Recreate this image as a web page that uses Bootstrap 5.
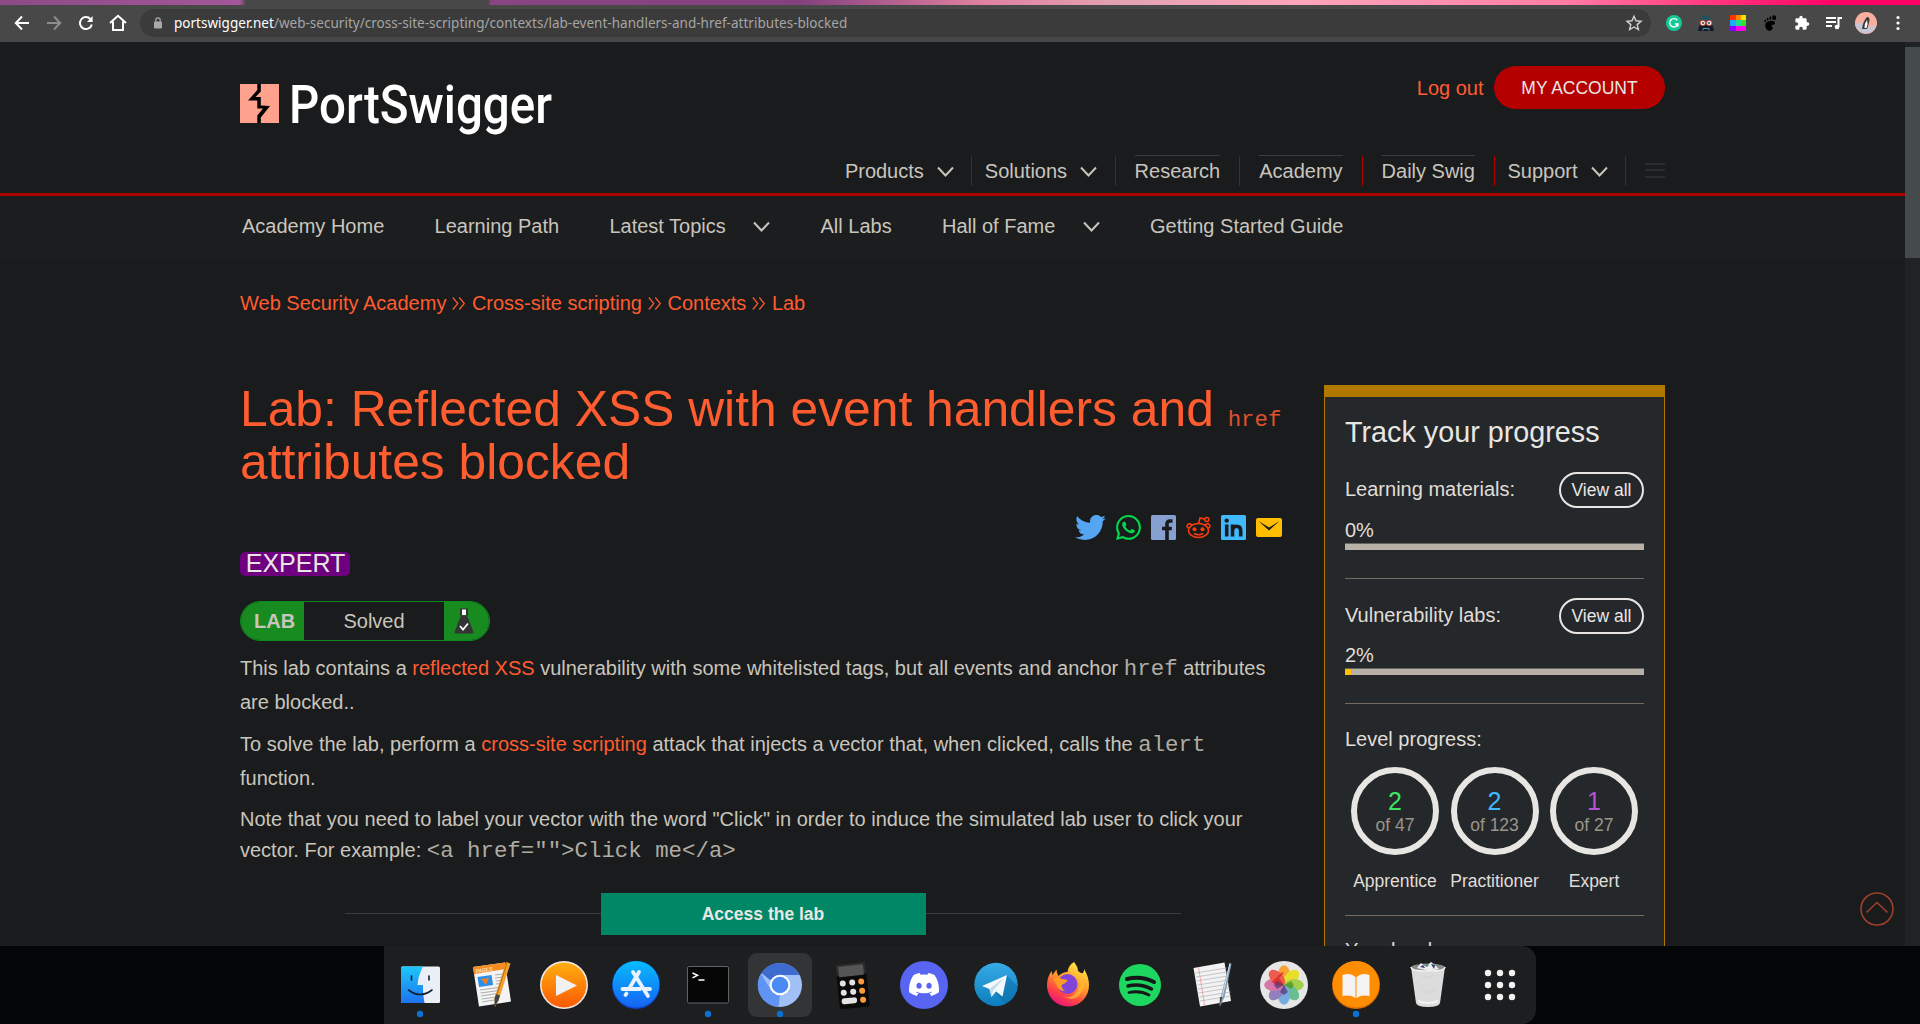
<!DOCTYPE html>
<html lang="en">
<head>
<meta charset="utf-8">
<title>Lab: Reflected XSS with event handlers and href attributes blocked</title>
<link href="https://cdn.jsdelivr.net/npm/bootstrap@5.3.0/dist/css/bootstrap.min.css" rel="stylesheet">
<style>
body{width:1920px;height:1024px;overflow:hidden;background:#191b1c;color:#c9c5bd;font:20px/30px "Liberation Sans",Arial,sans-serif}
svg{display:block;flex:none}
a{color:#ff5c30;text-decoration:none}
.tabstrip{height:5px;background:linear-gradient(90deg,#8d4a86 0,#a3579a 240px,#474747 246px,#474747 488px,#8a4584 491px,#84407f 800px,#e080a0 980px,#e2a2b2 1120px,#ffa5bb 1300px,#ff7ea6 1560px,#ff2a78 1740px,#ff0066 1840px)}
.toolbar{height:37px;background:#484848;padding-left:6px;padding-right:6px}
.tool{width:32px;height:36px;padding-bottom:1px;display:flex;align-items:center;justify-content:center}
.urlbar{width:1511px;height:28px;margin-left:6px;margin-right:7px;margin-top:-1px;border-radius:14px;background:#3b3b3b;font:13.5px/28px "Noto Sans",sans-serif;color:#a5a5a5;padding:0 8px 0 13px}
.urltext{margin-left:11px;letter-spacing:.02px;white-space:nowrap}
.viewport-row{height:904px}
.webpage{width:1905px;overflow:hidden;position:relative}
.scroller{width:15px;background:#202324;padding-top:5px}
.scroller div{height:211px;background:#454a4d}
.wrap{width:1425px;margin-left:240px}
.masthead{height:154px;border-bottom:3px solid #aa0000;background:#1a1b1d}
.masthead .wrap{height:151px}
.brandmark{padding-top:41px}
.brandmark svg{overflow:visible}
.account-btn{width:171px;height:43px;border-radius:22px;background:#b50000;color:#e8e6e3;font-size:17.5px;line-height:43px;border:0;padding:1px 0 0;text-align:center}
.mainnav{height:30px;line-height:30px;margin-bottom:7px}
.mainnav>div{border-right:1px solid #aa0000;height:30px}
.drop{padding:0 17.5px 0 12.5px;display:flex;align-items:center;gap:13px}
.plain{padding:0 19px}
.plain span{display:block;box-shadow:0 -1px 0 #3a3d3f}
.mainnav>.last{border:0;padding:7px 0 0 19px}
.subnav{height:62px;line-height:58px;padding-left:242px;gap:50.3px;background:#1b1d1e}
.subnav div{white-space:nowrap;display:flex;align-items:center;height:60px;gap:27.4px}
.crumbs{height:30px;margin-top:30px;color:#ff5c30;gap:5px}
.columns{margin-top:64px}
.lesson{width:1043px}
h1{font-size:49.78px;line-height:53px;font-weight:400;color:#ff5c30;margin:1px 0 0;white-space:nowrap}
code{font:22.4px/1 "Liberation Mono","Courier New",monospace;color:inherit;line-height:0;opacity:.85}
.social{height:25px;margin-top:26px;padding-right:1px;gap:10px}
.level{width:110px;height:24px;line-height:22px;margin-top:12px;padding-left:1px;border-radius:5px;background:#6e0080;color:#e8e6e3;font-size:25px;text-align:center}
.lab-pill{width:250px;height:40px;margin-top:25px;border:1px solid #0b8a1d;border-radius:20px;overflow:hidden;line-height:38px}
.lab-pill .tag{width:63px;background:#178b1f;font-weight:700;padding-left:13px}
.lab-pill .flask{width:45px;background:#178b1f;padding:6px 0 0 10px}
.lesson p{margin:0 0 8px;line-height:34px;white-space:nowrap}
.lesson p.tight{line-height:31px;margin:9px 0 0}
.launch{margin:27px 102px 0 105px}
.launch i{height:1px;background:#3a3d3f;flex:1;margin-bottom:2px}
.launch .btn{width:325px;height:42px;border:0;border-radius:0;background:#008766;color:#e8e6e3;font-weight:700;font-size:17.5px;line-height:40px;padding:0 0 1px}
.tracker{width:341px;height:575px;margin-left:41px;margin-top:3px;border:1px solid #b07800;border-top-width:12px;background:#25282b;color:#e0ddd8;padding:0 20px}
.tracker h2{font-size:28.75px;line-height:34px;font-weight:400;margin:18px 0 23px;color:#e8e6e3}
.tracker .title{padding-bottom:2px}
.tracker .pill{width:85px;height:36px;border:2px solid #e8e6e3;border-radius:18px;text-align:center;font-size:17.5px;line-height:33px;color:#e8e6e3}
.tracker .pct{line-height:30px;margin-top:7px}
.meter{height:7px;margin-top:-2px;background:#b7b1a7;margin-bottom:28px;border-top:1px solid #66645f}
.meter div{height:6px;background:#ffbe00}
.rule{height:1px;background:#736b5e}
.ring{width:88px;height:88px;border:6px solid #e8e6e3;border-radius:50%;text-align:center;padding-top:15px;line-height:20px;font-size:17.5px;color:#9b958a}
.ring b{display:block;font-weight:400;font-size:25px;line-height:27px}
.lvls{margin:13px 0 0 6px;gap:11.5px}
.lvls>div{width:88px;font-size:17.5px;text-align:center;color:#e0ddd8;white-space:nowrap}
.lvls .cap{margin:11px -4px 0;line-height:30px}
.totop{position:absolute;right:11px;bottom:20px}
.dockbar{height:78px;background:#040506}
.dock{width:1152px;margin-left:384px;background:#1d1e1f;border-radius:0 14px 14px 0}
</style>
<script src="https://cdn.jsdelivr.net/npm/bootstrap@5.3.0/dist/js/bootstrap.bundle.min.js"></script>
</head>
<body>
<div class="tabstrip"></div>
<div class="toolbar d-flex align-items-center">
 <div class="tool"><svg width="16" height="16" fill="none" stroke="#fff" stroke-width="2"><path d="M15 8H2M8 1.5 1.8 8 8 14.5"/></svg></div>
 <div class="tool"><svg width="16" height="16" fill="none" stroke="#8d8d8d" stroke-width="2"><path d="M1 8h13M8 1.5 14.2 8 8 14.5"/></svg></div>
 <div class="tool"><svg width="16" height="16" fill="none" stroke="#fff" stroke-width="2"><path d="M13.8 9.5A6 6 0 1 1 12.4 4"/><path d="M14.6 1v6H9z" fill="#fff" stroke="none"/></svg></div>
 <div class="tool"><svg width="18" height="18" fill="none" stroke="#fff" stroke-width="2"><path d="M1 9 9 1.8 17 9M4 7.5V16h10V7.5"/></svg></div>
 <div class="urlbar d-flex align-items-center">
  <svg width="10" height="12"><rect x="1" y="4.5" width="8" height="7" rx="1" fill="#a9a9ad"/><path d="M2.8 5V3a2.2 2.2 0 0 1 4.400 0v2" fill="none" stroke="#a9a9ad" stroke-width="1.2"/></svg>
  <span class="urltext"><span class="text-white">portswigger.net</span>/web-security/cross-site-scripting/contexts/lab-event-handlers-and-href-attributes-blocked</span>
  <svg class="ms-auto" width="18" height="18" viewBox="0 0 18 18" fill="none" stroke="#d0d0d0" stroke-width="1.400"><path d="M9 2.200 11 6.800l5 .5-3.800 3.300 1.200 5L9 13l-4.400 2.600 1.200-5L2 7.300l5-.5z"/></svg>
 </div>
 <div class="tool"><svg width="16" height="16"><circle cx="8" cy="8" r="8" fill="#11c996"/><path d="M11.300 5.200A4.200 4.200 0 1 0 12 9H8.800M12 8.500v3" fill="none" stroke="#fff" stroke-width="1.400"/></svg></div>
 <div class="tool"><svg width="18" height="18"><path d="M4 8Q4 1 9 1t5 7l3 9H1z" fill="#22505f"/><path d="M2.500 11h13l1.500 6H1z" fill="#111d28"/><circle cx="5.800" cy="9" r="3" fill="#d8503d"/><circle cx="12.200" cy="9" r="3" fill="#d8503d"/><circle cx="5.800" cy="9" r="2.100" fill="#fff"/><circle cx="12.200" cy="9" r="2.100" fill="#fff"/><circle cx="6" cy="9" r=".9" fill="#123"/><circle cx="12" cy="9" r=".9" fill="#123"/><path d="M6 16.500v-2h6v2" stroke="#5c8ba8" fill="none"/></svg></div>
 <div class="tool"><svg width="16" height="16" shape-rendering="crispEdges"><path d="M0 0h6v5H0z" fill="#ff3300"/><path d="M6 0h5v5H6z" fill="#ff8a00"/><path d="M11 0h5v5h-5z" fill="#ffe100"/><path d="M0 5h6v6H0z" fill="#25a8ff"/><path d="M6 5h5v6H6z" fill="#1ee08a"/><path d="M11 5h5v6h-5z" fill="#35e02b"/><path d="M0 11h6v5H0z" fill="#8f00ff"/><path d="M6 11h10v5H6z" fill="#ff00ee"/></svg></div>
 <div class="tool"><svg width="14" height="16" fill="#000"><path d="M7 6c3-.5 5 .3 5 2 0 1.600-1.500 1.800-2.800 2-1.300.3-1 1.500 0 1.800 1 .4.800 3.500-2.200 4C4 16 2.300 13 2.300 10.300S4 6.500 7 6z"/><ellipse cx="11.200" cy="2.700" rx="2" ry="2.400"/><ellipse cx="7.400" cy="3" rx="1" ry="1.700"/><ellipse cx="4.600" cy="4.200" rx=".9" ry="1.400"/><ellipse cx="2.200" cy="6" rx=".8" ry="1.200"/></svg></div>
 <div class="tool"><svg width="16" height="16" viewBox="0 0 24 24" fill="#fff"><path d="M20.500 11H19V7c0-1.100-.9-2-2-2h-4V3.500a2.500 2.500 0 0 0-5 0V5H4c-1.100 0-2 .9-2 2v3.800h1.500a2.700 2.700 0 0 1 0 5.400H2V20c0 1.100.9 2 2 2h3.800v-1.500a2.700 2.700 0 0 1 5.400 0V22H17c1.100 0 2-.9 2-2v-4h1.500a2.500 2.500 0 0 0 0-5z"/></svg></div>
 <div class="tool"><svg width="18" height="16" fill="none" stroke="#fff" stroke-width="2"><path d="M1 3h10M1 7h10M1 11h6M13.500 12V3H17"/><circle cx="12" cy="12" r="2.300" fill="#fff" stroke="none"/></svg></div>
 <div class="tool"><svg width="22" height="22"><circle cx="11" cy="11" r="11" fill="#f9b0a0"/><path d="M0 12.500 5 10l8 5 8.500-2A11 11 0 0 1 0 12.500z" fill="#c6c6d4"/><path d="M7 17q1-8 5-12 2.500-.5 2.500 2.500T12 17z" fill="#3a3a3a"/><path d="M9.500 16q0-5 2.500-8 1.500 4-.5 8z" fill="#fff"/></svg></div>
 <div class="tool"><svg width="4" height="16" fill="#fff"><circle cx="2" cy="2.500" r="1.600"/><circle cx="2" cy="8" r="1.600"/><circle cx="2" cy="13.500" r="1.600"/></svg></div>
</div>

<div class="viewport-row d-flex">
<div class="webpage">
 <header class="masthead">
  <div class="wrap d-flex justify-content-between">
   <div class="brandmark">
    <svg width="320" height="66"><rect y="1" width="39" height="39" fill="#ffa28d"/><path d="M17.300 1h3.500v7.500L15.500 14h5.300v8.500l9.200.5-9.200 11.500V40h-3.500v-7.500l5.700-7h-5.700v-7.900H8L17.300 7z" fill="#000"/><text x="49" y="40" font-family="Roboto" font-weight="500" font-size="54" fill="#fff" textLength="263" lengthAdjust="spacingAndGlyphs">PortSwigger</text></svg>
   </div>
   <div class="d-flex flex-column justify-content-between align-items-end pt-4">
    <div class="d-flex align-items-center"><a href="#" style="margin-right:10.500px">Log out</a><button class="account-btn">MY ACCOUNT</button></div>
    <nav class="mainnav d-flex">
     <div class="drop">Products <svg width="17" height="11" fill="none" stroke="#c9c5bd" stroke-width="2"><path d="m1 1.500 7.500 8 7.500-8"/></svg></div>
     <div class="drop">Solutions <svg width="17" height="11" fill="none" stroke="#c9c5bd" stroke-width="2"><path d="m1 1.500 7.500 8 7.500-8"/></svg></div>
     <div class="plain"><span>Research</span></div>
     <div class="plain"><span>Academy</span></div>
     <div class="plain"><span>Daily Swig</span></div>
     <div class="drop">Support <svg width="17" height="11" fill="none" stroke="#c9c5bd" stroke-width="2"><path d="m1 1.500 7.500 8 7.500-8"/></svg></div>
     <div class="last"><svg width="20" height="16" fill="#292b2d"><path d="M0 0h20v2H0zM0 6h20v2H0zM0 13h20v2H0z"/></svg></div>
    </nav>
   </div>
  </div>
 </header>
 <nav class="subnav d-flex">
  <div>Academy Home</div><div>Learning Path</div>
  <div>Latest Topics <svg width="17" height="11" fill="none" stroke="#c9c5bd" stroke-width="2"><path d="m1 1.500 7.500 8 7.500-8"/></svg></div>
  <div>All Labs</div>
  <div>Hall of Fame <svg width="17" height="11" fill="none" stroke="#c9c5bd" stroke-width="2"><path d="m1 1.500 7.500 8 7.500-8"/></svg></div>
  <div>Getting Started Guide</div>
 </nav>
 <main class="wrap">
  <div class="crumbs d-flex align-items-center">
   <a href="#">Web Security Academy</a><svg width="15.500" height="13" fill="none" stroke="#ff5c30" stroke-width="1.200"><path d="m1.800.5 5 6-5 6M8.300.5l5 6-5 6"/></svg>
   <a href="#">Cross-site scripting</a><svg width="15.500" height="13" fill="none" stroke="#ff5c30" stroke-width="1.200"><path d="m1.800.5 5 6-5 6M8.300.5l5 6-5 6"/></svg>
   <a href="#">Contexts</a><svg width="15.500" height="13" fill="none" stroke="#ff5c30" stroke-width="1.200"><path d="m1.800.5 5 6-5 6M8.300.5l5 6-5 6"/></svg>
   <a href="#">Lab</a>
  </div>
  <div class="columns d-flex">
   <article class="lesson">
    <h1>Lab: Reflected XSS with event handlers and <code>href</code><br>attributes blocked</h1>
    <div class="social d-flex justify-content-end align-items-center">
     <svg width="31" height="25" viewBox="0 2 16 13" fill="#55a5f3"><path d="M5.026 15c6.038 0 9.341-5.003 9.341-9.334 0-.14 0-.282-.006-.422A6.685 6.685 0 0 0 16 3.542a6.658 6.658 0 0 1-1.889.518 3.301 3.301 0 0 0 1.447-1.817 6.533 6.533 0 0 1-2.087.793A3.286 3.286 0 0 0 7.875 6.030a9.325 9.325 0 0 1-6.767-3.429 3.289 3.289 0 0 0 1.018 4.382A3.323 3.323 0 0 1 .64 6.575v.045a3.288 3.288 0 0 0 2.632 3.218 3.203 3.203 0 0 1-.865.115 3.230 3.230 0 0 1-.614-.057 3.283 3.283 0 0 0 3.067 2.277A6.588 6.588 0 0 1 .78 13.580a6.320 6.320 0 0 1-.78-.045A9.344 9.344 0 0 0 5.026 15z"/></svg>
     <svg width="25" height="25" viewBox="0 0 16 16" fill="#00d94c"><path d="M13.601 2.326A7.854 7.854 0 0 0 7.994 0C3.627 0 .068 3.558.064 7.926c0 1.399.366 2.760 1.057 3.965L0 16l4.204-1.102a7.933 7.933 0 0 0 3.790.965h.004c4.368 0 7.926-3.558 7.930-7.930A7.898 7.898 0 0 0 13.600 2.326zM7.994 14.521a6.573 6.573 0 0 1-3.356-.92l-.24-.144-2.494.654.666-2.433-.156-.251a6.560 6.560 0 0 1-1.007-3.505c0-3.626 2.957-6.584 6.591-6.584a6.560 6.560 0 0 1 4.660 1.931 6.557 6.557 0 0 1 1.928 4.660c-.004 3.639-2.961 6.592-6.592 6.592zm3.615-4.934c-.197-.099-1.170-.578-1.353-.646-.182-.065-.315-.099-.445.099-.133.197-.513.646-.627.775-.114.133-.232.148-.43.05-.197-.1-.836-.308-1.592-.985-.59-.525-.985-1.175-1.103-1.372-.114-.198-.011-.304.088-.403.087-.088.197-.232.296-.346.1-.114.133-.198.198-.33.065-.134.034-.248-.015-.347-.05-.099-.445-1.076-.612-1.470-.16-.389-.323-.335-.445-.34-.114-.007-.247-.007-.38-.007a.729.729 0 0 0-.529.247c-.182.198-.691.677-.691 1.654 0 .977.71 1.916.81 2.049.098.133 1.394 2.132 3.383 2.992.47.205.84.326 1.129.418.475.152.904.129 1.246.08.38-.058 1.171-.48 1.338-.943.164-.464.164-.86.114-.943-.049-.084-.182-.133-.38-.232z"/></svg>
     <svg width="25" height="25"><rect width="25" height="25" rx="1.500" fill="#86a0d0"/><path d="M21.500 6H19q-3 0-3 3v16M11 13.500h9.800" fill="none" stroke="#191b1c" stroke-width="3.600"/></svg>
     <svg width="25" height="25" fill="none" stroke="#ff3c0a" stroke-width="1.500"><ellipse cx="12.500" cy="15.500" rx="10" ry="7"/><path d="M12.500 8.500 14 3l5 1.200M2.800 13Q0 12 1.500 9.800T6 9.800M22.200 13q2.800-1 1.300-3.200T19 9.800M8 18.500q4.500 2.500 9 0"/><circle cx="20.800" cy="4.600" r="2"/><g fill="#ff3c0a" stroke="none"><circle cx="8.500" cy="14.300" r="2"/><circle cx="16.500" cy="14.300" r="2"/></g></svg>
     <svg width="25" height="25"><rect width="25" height="25" rx="1.500" fill="#40b9ff"/><g fill="none" stroke="#191b1c" stroke-width="3.600"><path d="M5.700 9.500v12M11.500 9.500v12M11.500 15.500q0-4.300 4-4.300 4.200 0 4.200 4.300v6"/></g><circle cx="5.700" cy="5.600" r="2.200" fill="#191b1c"/></svg>
     <svg width="26" height="25"><rect y="3" width="26" height="19" rx="2" fill="#ffbe00"/><path d="m2.500 6 10.500 9.500L23.500 6 13 12.500z" fill="#191b1c"/></svg>
    </div>
    <div class="level">EXPERT</div>
    <div class="lab-pill d-flex"><div class="tag">LAB</div><div class="flex-fill text-center">Solved</div><div class="flask"><svg width="20" height="26"><path d="M7 7.500h6l6.500 16.500q0 1.500-1.500 1.500H2Q.5 25.500.5 24z" fill="#343434"/><path d="M6 .5h8v7H6z" fill="#343434"/><path d="M8 1.500h4v5.500H8z" fill="#fff"/><path d="m6 18 3 3.500 5-6" fill="none" stroke="#fff" stroke-width="1.800"/></svg></div></div>
    <p style="margin-top:10px">This lab contains a <a href="#">reflected XSS</a> vulnerability with some whitelisted tags, but all events and anchor <code>href</code> attributes<br>are blocked..</p>
    <p>To solve the lab, perform a <a href="#">cross-site scripting</a> attack that injects a vector that, when clicked, calls the <code>alert</code><br>function.</p>
    <p class="tight">Note that you need to label your vector with the word "Click" in order to induce the simulated lab user to click your<br>vector. For example: <code>&lt;a href=""&gt;Click me&lt;/a&gt;</code></p>
    <div class="launch d-flex align-items-center"><i></i><button class="btn">Access the lab</button><i></i></div>
   </article>
   <aside class="tracker">
    <h2>Track your progress</h2>
    <div class="d-flex justify-content-between align-items-center"><span class="title">Learning materials:</span><a class="pill" href="#">View all</a></div>
    <div class="pct">0%</div><div class="meter"></div><div class="rule"></div>
    <div class="d-flex justify-content-between align-items-center" style="margin-top:19px"><span class="title">Vulnerability labs:</span><a class="pill" href="#">View all</a></div>
    <div class="pct" style="margin-top:6px">2%</div><div class="meter"><div style="width:2%"></div></div><div class="rule"></div>
    <div style="margin-top:20px">Level progress:</div>
    <div class="lvls d-flex">
     <div><div class="ring"><b style="color:#3ee564">2</b>of 47</div><div class="cap">Apprentice</div></div>
     <div><div class="ring"><b style="color:#40b9ff">2</b>of 123</div><div class="cap">Practitioner</div></div>
     <div><div class="ring"><b style="color:#b653d0">1</b>of 27</div><div class="cap">Expert</div></div>
    </div>
    <div class="rule" style="margin-top:19px"></div>
    <div style="margin-top:19px">Your level:</div>
   </aside>
  </div>
 </main>
 <a class="totop" href="#"><svg width="34" height="34" fill="none" stroke="#a0402a" stroke-width="1.600"><circle cx="17" cy="17" r="16"/><path d="m6.500 20.500 10.500-10 10.500 10"/></svg></a>
</div>
<div class="scroller"><div></div></div>
</div>

<div class="dockbar">
<div class="dock d-flex">
 <svg width="72" height="78"><defs><linearGradient id="fb" x2="0" y2="1"><stop stop-color="#1dc7fb"/><stop offset="1" stop-color="#1e72f0"/></linearGradient><linearGradient id="og" x2="0" y2="1"><stop stop-color="#ffae10"/><stop offset="1" stop-color="#fb5a05"/></linearGradient><linearGradient id="ab" x2="0" y2="1"><stop stop-color="#06bdfd"/><stop offset="1" stop-color="#1763f3"/></linearGradient><linearGradient id="tg" x2="0" y2="1"><stop stop-color="#37abe6"/><stop offset="1" stop-color="#0b7dbd"/></linearGradient><linearGradient id="ff" x1=".8" x2=".3" y2="1"><stop stop-color="#fff04a"/><stop offset=".45" stop-color="#ff9a28"/><stop offset=".75" stop-color="#ff4346"/><stop offset="1" stop-color="#e8127c"/></linearGradient></defs>
  <rect x="17" y="20.500" width="39" height="36.500" rx="1.500" fill="#e9eef7"/><path d="M18.500 20.500H39Q34 30 33.500 39H39q-.5 9 1.500 18h-22q-1.500 0-1.500-1.500V22q0-1.500 1.500-1.500z" fill="url(#fb)"/><path d="M27.500 30v4M45 30v4M24.500 44q11.500 9 23.500 0" fill="none" stroke="#10202e" stroke-width="1.600" stroke-linecap="round"/><circle cx="36" cy="68" r="3.200" fill="#0b72d2"/></svg>
 <svg width="72" height="78"><path d="m17 21 32-4.500 6 39-32 5z" fill="#f4f4f4"/><path d="m17 21 32-4.500 1 6.500-32 5z" fill="#f58c20"/><text x="20" y="27" font-family="Liberation Sans" font-size="5" fill="#fff" transform="rotate(-8 20 27)">PAGES</text><path d="m21.500 31 14-2 1.600 10-14 2z" fill="#2a8eea"/><path d="m25 33 8-1-3 7z" fill="#f08020"/><path d="m39 29 8-1M39 32l8-1M40 35l8-1M40 38l8-1M24 44l22-3M24.500 47l22-3M25 50l20-3M25.500 53l15-2M26 56l12-2" stroke="#a5a5a5" stroke-width=".9"/><path d="m50 16 4.500 1.500L43 53l-4 8-.5-9z" fill="#f3a02c"/><path d="m40 48 4 1.500-1.500 5L38.500 61V53z" fill="#444"/><path d="m51 17-10 31" stroke="#b66d13"/></svg>
 <svg width="72" height="78"><circle cx="36" cy="39" r="24" fill="#f2ece8"/><circle cx="36" cy="39" r="22.500" fill="url(#og)"/><path d="M28 29v21l21-10.500z" fill="#f1f1f1"/></svg>
 <svg width="72" height="78"><circle cx="36" cy="39" r="24" fill="#0b46cc"/><circle cx="36" cy="38.300" r="23.300" fill="url(#ab)"/><g stroke="#e9f2ff" stroke-width="3.800" stroke-linecap="round" fill="none"><path d="m33 26 15 24M39 26 29.500 42M22.500 43H40M44.500 43H50M26.500 47.500 25.500 49"/></g></svg>
 <svg width="72" height="78"><rect x="15.500" y="20.500" width="41" height="36.500" rx="1.500" fill="#060606" stroke="#606566"/><path d="m20.500 27 5 2.300-5 2.600M26.500 34h6" fill="none" stroke="#fff" stroke-width="1.500"/><circle cx="36" cy="68" r="3.200" fill="#0b72d2"/></svg>
 <svg width="72" height="78"><rect x="4" y="7" width="64" height="64" rx="9" fill="#333435"/><circle cx="36" cy="39" r="22" fill="#a2c0f8"/><path d="M36 17a22 22 0 0 1 19.500 12H36L26 34 17.500 27A22 22 0 0 1 36 17z" fill="#3d6bd0"/><path d="M17 27.500 27.500 45 36 49l-1.500 12A22 22 0 0 1 17 27.500z" fill="#6094f4"/><circle cx="36" cy="39" r="10.300" fill="#fff"/><circle cx="36" cy="39" r="8.300" fill="#4a8af4"/><circle cx="36" cy="68" r="3.200" fill="#0b72d2"/></svg>
 <svg width="72" height="78"><g transform="rotate(-6 36 39)"><rect x="21.500" y="17" width="30" height="45" rx="2" fill="#0a0a0a"/><path d="M21.500 17h30v12h-30z" fill="#2a2a2a"/><rect x="24" y="19.500" width="25" height="10.500" rx="1" fill="#555"/><g fill="#e3e3e3"><circle cx="27" cy="36.500" r="3"/><circle cx="36.500" cy="36.500" r="3"/><circle cx="27" cy="45.800" r="3"/><circle cx="36.500" cy="45.800" r="3"/><rect x="24" y="51.500" width="15.500" height="6" rx="3"/></g><g fill="#f99b3b"><circle cx="45.500" cy="36.500" r="3"/><circle cx="45.500" cy="45.800" r="3"/><circle cx="45.500" cy="54.800" r="3"/></g></g></svg>
 <svg width="72" height="78"><circle cx="36" cy="39" r="24" fill="#5865f2"/><path transform="translate(21 23.500) scale(1.880)" fill="#fff" d="M13.545 2.907a13.227 13.227 0 0 0-3.257-1.011.05.05 0 0 0-.052.025c-.141.25-.297.577-.406.833a12.190 12.190 0 0 0-3.658 0 8.258 8.258 0 0 0-.412-.833.051.051 0 0 0-.052-.025c-1.125.194-2.220.534-3.257 1.011a.041.041 0 0 0-.021.018C.356 6.024-.213 9.047.066 12.032c.001.014.01.028.021.037a13.276 13.276 0 0 0 3.995 2.020.05.05 0 0 0 .056-.019c.308-.42.582-.863.818-1.329a.05.05 0 0 0-.01-.059.051.051 0 0 0-.018-.011 8.875 8.875 0 0 1-1.248-.595.05.05 0 0 1-.02-.066.051.051 0 0 1 .015-.019c.084-.063.168-.129.248-.195a.05.05 0 0 1 .051-.007c2.619 1.196 5.454 1.196 8.041 0a.052.052 0 0 1 .053.007c.08.066.164.132.248.195a.051.051 0 0 1-.004.085 8.254 8.254 0 0 1-1.249.594.05.05 0 0 0-.03.03.052.052 0 0 0 .003.041c.24.465.515.909.817 1.329a.05.05 0 0 0 .056.019 13.235 13.235 0 0 0 4.001-2.020.049.049 0 0 0 .021-.037c.334-3.451-.559-6.449-2.366-9.106a.034.034 0 0 0-.02-.019Zm-8.198 7.307c-.789 0-1.438-.724-1.438-1.612 0-.889.637-1.613 1.438-1.613.807 0 1.450.73 1.438 1.613 0 .888-.637 1.612-1.438 1.612Zm5.316 0c-.788 0-1.438-.724-1.438-1.612 0-.889.637-1.613 1.438-1.613.807 0 1.451.73 1.438 1.613 0 .888-.631 1.612-1.438 1.612Z"/></svg>
 <svg width="72" height="78"><circle cx="36" cy="38.500" r="21.700" fill="url(#tg)"/><path d="m46.500 29 11 11A21.700 21.700 0 0 1 45 58L34 45z" fill="#0a6ca6" opacity=".5"/><path d="M22 40 47 29l-4.500 21.500-6.500-5-4.500 5.500-2-8z" fill="#f3f8fb"/><path d="m29.500 43 15-11.500L33 44.500l-1.500 6.500z" fill="#c4dcea"/></svg>
 <svg width="72" height="78"><path d="M42 16q4 5 4 9l3 2q3 1 3-4 5 8 5 16a21 21 0 0 1-42 1q0-9 4.500-15l1 4 4-5.500q0 4 2 6.500 4-4 9-4 1-7 6.500-10z" fill="url(#ff)"/><circle cx="35.500" cy="38" r="10" fill="#8044d8"/><path d="M21 33q5-3 9 0 4 0 5.500 1.500-2 3.500-6 4.500 0 4 4 6-7 0-9-6z" fill="#ff9b23"/><path d="M46 25q7 13-4 24-6 4-12 1 16 9 22-9 0-9-6-16z" fill="#ffbd32" opacity=".7"/></svg>
 <svg width="72" height="78"><circle cx="36" cy="39" r="21" fill="#1ed760"/><g fill="none" stroke="#151718" stroke-linecap="round"><path d="M23 33q14-3.500 27 3" stroke-width="4"/><path d="M24 40q12-3 23.500 3" stroke-width="3.400"/><path d="M25 46.500q11-2.300 20 2.500" stroke-width="2.800"/></g></svg>
 <svg width="72" height="78"><g transform="translate(-3.500)"><path d="m21 22 31-5.500L58.500 55l-31 5.500z" fill="#f4f3f3"/><path d="m23 27 31-5M23.500 31l31-5M24 35l31-5M25 39l31-5M25.500 43l31-5M26 47l31-5M27 51l31-5M27.500 55l31-5" stroke="#b9b9c2" stroke-width=".8"/><path d="m26 21 6 38" stroke="#e99" stroke-width=".8"/></g><path d="m53.500 17 2 1-7 33-4.500 9.500-.5-1.500 1.500-9z" fill="#7c9cba"/><path d="m54 17.500-8.500 36" stroke="#ddd"/><path d="m46.500 51-3 9 .5-9z" fill="#444"/></svg>
 <svg width="72" height="78"><circle cx="36" cy="39" r="24" fill="#e6e6e6"/><g opacity=".88"><ellipse cx="36" cy="29" rx="6" ry="9.800" fill="#f99b20"/><ellipse cx="36" cy="29" rx="6" ry="9.800" fill="#e9df12" transform="rotate(45 36 39)"/><ellipse cx="36" cy="29" rx="6" ry="9.800" fill="#9cce38" transform="rotate(90 36 39)"/><ellipse cx="36" cy="29" rx="6" ry="9.800" fill="#59b888" transform="rotate(135 36 39)"/><ellipse cx="36" cy="29" rx="6" ry="9.800" fill="#66a6dc" transform="rotate(180 36 39)"/><ellipse cx="36" cy="29" rx="6" ry="9.800" fill="#8673b8" transform="rotate(225 36 39)"/><ellipse cx="36" cy="29" rx="6" ry="9.800" fill="#d368a0" transform="rotate(270 36 39)"/><ellipse cx="36" cy="29" rx="6" ry="9.800" fill="#ee493b" transform="rotate(315 36 39)"/></g><path d="m36 39-5-7 5-5-2-1-5 5-5 5 4 3z" fill="#d01818" opacity=".6"/><path d="m36 39-7-4-3 4 3 4zM36 39l-4 7 4 3 4-3z" fill="#537" opacity=".7"/><path d="m36 39 7-4 3 4-3 4z" fill="#480" opacity=".6"/></svg>
 <svg width="72" height="78"><circle cx="36" cy="39" r="24" fill="#dc6a00"/><circle cx="36" cy="38.300" r="23.300" fill="#ff8d02"/><path d="M35.500 31q-5-5-13-2v21q8-1.500 13 2zM36.500 31q5-5 13-2v21q-8-1.500-13 2z" fill="#f5f3f1"/><circle cx="36" cy="68" r="3.200" fill="#0b72d2"/></svg>
 <svg width="72" height="78"><path d="m19 21 5 36q1 4 12 4t12-4l5-36z" fill="#dcdcdc"/><ellipse cx="36" cy="21.500" rx="17" ry="4" fill="#8a8a8a"/><path d="m25 22 4-5 5 4 5-5 5 4 3 3-10 2z" fill="#eee"/><path d="m28 21 3-2 2 3zM39 18l4 1-1 4z" fill="#223b66"/><path d="m34 18 3 1-2 2z" fill="#2a9c7b"/><path d="m19 21q0 4 17 4t17-4" fill="none" stroke="#f7f7f7" stroke-width="1.500"/><path d="m30 30 5 2 7-3M29 42l8 5 6-4" stroke="#c9c9c9" fill="none" opacity=".6"/><path d="M26 55q10 4 20 0" stroke="#f4f4f4" fill="none" stroke-width="2"/></svg>
 <svg width="72" height="78" fill="#f2f2f2"><circle cx="24" cy="27" r="3.200"/><circle cx="36" cy="27" r="3.200"/><circle cx="48" cy="27" r="3.200"/><circle cx="24" cy="39" r="3.200"/><circle cx="36" cy="39" r="3.200"/><circle cx="48" cy="39" r="3.200"/><circle cx="24" cy="51" r="3.200"/><circle cx="36" cy="51" r="3.200"/><circle cx="48" cy="51" r="3.200"/></svg>
</div>
</div>
</body>
</html>
